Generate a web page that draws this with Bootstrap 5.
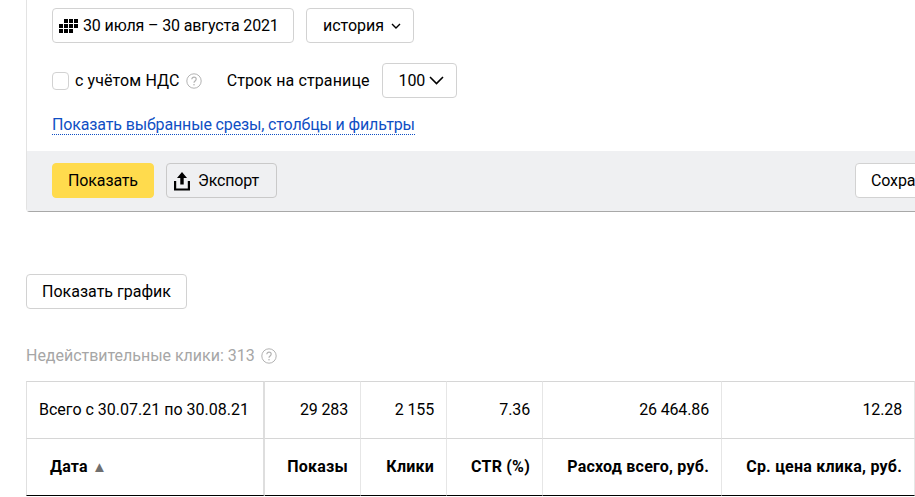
<!DOCTYPE html>
<html lang="ru">
<head>
<meta charset="utf-8">
<title>Статистика</title>
<link href="https://cdn.jsdelivr.net/npm/bootstrap@5.3.0/dist/css/bootstrap.min.css" rel="stylesheet">
<style>
html,body{height:497px;overflow:hidden;background:#fff}
body{font-family:Roboto,"Liberation Sans",sans-serif;font-size:16px;letter-spacing:-.14px;color:#000;line-height:20px}
.pg{width:1200px;padding-left:26px}
.panel{width:1100px;border-left:1px solid #e3e3e3;border-bottom:1px solid #a8a8a8;border-bottom-left-radius:4px;height:212px;display:flex;flex-direction:column}
.body-a{padding:8px 0 0 25px;flex:1}
.ctl{height:35px;border:1px solid #d2d2d2;border-radius:4px;background:#fff;color:#000;font-size:16px;letter-spacing:-.14px;padding:0;display:inline-flex;align-items:center;justify-content:center;line-height:20px}
.c-date{width:242px;justify-content:flex-start;padding-left:6px;gap:5px}
.c-hist{width:108px;margin-left:12px;gap:7px;letter-spacing:0;justify-content:flex-start;padding-left:16px}
.line2{margin-top:20px;height:35px;letter-spacing:.12px}
.chk{width:17px;height:18px;border:1px solid #d2d2d2;border-radius:4px;background:#fff;display:block}
.q{color:#b3b3b3;display:block}
.gap6{margin-left:6px}
.gap25{margin-left:25px}
.c-100{width:75px;gap:4px;margin-left:12px;justify-content:flex-start;padding-left:16px}
.lnk{display:inline-block;margin-top:17px;color:#0f4fc4;text-decoration:none;line-height:19px;border-bottom:1px dotted #0f4fc4}
.foot{background:#eff0f2;height:60px;padding:12px 0 0 25px;position:relative}
.c-show{width:102px;background:#ffdb4d;border-color:#ffdb4d}
.c-exp{width:111px;margin-left:12px;background:#eff0f2;border-color:#c9c9c9;gap:8px;justify-content:flex-start;padding-left:7px}
.c-save{position:absolute;left:828px;top:12px;width:180px;justify-content:flex-start;padding-left:15px}
.c-graph{width:161px;margin-top:62px;letter-spacing:0}
.inv{margin-top:37px;color:#a6a6a6;height:20px;gap:6px;letter-spacing:-.02px}
.tb{margin-top:15px;border-collapse:separate;border-spacing:0;table-layout:fixed;width:889px}
.tb td,.tb th{padding:0 12px 0 0;text-align:right;border-right:1px solid #e6e6e6;vertical-align:middle;white-space:nowrap}
.tb td{height:58px;border-top:1px solid #d6d6d6;border-bottom:1px solid #d6d6d6}
.tb th{border-bottom:1px solid #000;font-weight:700;height:57px;letter-spacing:.22px}
.tb .f{text-align:left;border-left:1px solid #e0e0e0;border-right:2px solid #dedede;padding-left:12px;letter-spacing:0}
.tb th.f{padding-left:23px;letter-spacing:.22px}
.tri{color:#6f6f6f;font-size:15px;font-weight:400}
</style>
</head>
<body>
<div class="pg">
  <div class="panel">
    <div class="body-a">
      <div class="d-flex">
        <button type="button" class="ctl c-date">
          <svg width="19" height="14" viewBox="0 0 19 14" fill="#000"><path d="M5 0h4v4H5zM10 0h4v4h-4zM15 0h4v4h-4zM0 5h4v4H0zM5 5h4v4H5zM10 5h4v4h-4zM15 5h4v4h-4zM0 10h4v4H0zM5 10h4v4H5zM10 10h4v4h-4z"/></svg>
          <span>30 июля – 30 августа 2021</span>
        </button>
        <button type="button" class="ctl c-hist">
          <span>история</span>
          <svg width="10" height="6" viewBox="0 0 10 6" fill="none" stroke="#000" stroke-width="1.4"><path d="M1 1l4 4 4-4"/></svg>
        </button>
      </div>
      <div class="line2 d-flex align-items-center">
        <span class="chk"></span>
        <span class="gap6">с учётом НДС</span>
        <svg class="q gap6" width="16" height="16" viewBox="0 0 16 16" fill="none" stroke="currentColor"><circle cx="8" cy="8" r="7.2"/><path d="M5.8 6.2c0-1.3 1-2.1 2.2-2.1s2.2.8 2.2 2c0 1.900-2.200 1.800-2.200 3.700" stroke-width="1.200"/><circle cx="8" cy="11.800" r=".8" fill="currentColor" stroke="none"/></svg>
        <span class="gap25">Строк на странице</span>
        <button type="button" class="ctl c-100">
          <span>100</span>
          <svg width="15" height="9" viewBox="0 0 15 9" fill="none" stroke="#000" stroke-width="1.600"><path d="M1 1l6.500 6.500L14 1"/></svg>
        </button>
      </div>
      <a href="#" class="lnk">Показать выбранные срезы, столбцы и фильтры</a>
    </div>
    <div class="foot">
      <div class="d-flex">
        <button type="button" class="ctl c-show">Показать</button>
        <button type="button" class="ctl c-exp">
          <svg width="16" height="20" viewBox="0 0 16 20" fill="#000"><path d="M8 1l5 6H9.700v6.500H6.300V7H3z"/><path d="M0 10h2.200v7.500h11.600V10H16v9.500H0z"/></svg>
          <span>Экспорт</span>
        </button>
      </div>
      <button type="button" class="ctl c-save">Сохранить</button>
    </div>
  </div>
  <button type="button" class="ctl c-graph">Показать график</button>
  <div class="inv d-flex align-items-center">
    <span>Недействительные клики: 313</span>
    <svg class="q" width="16" height="16" viewBox="0 0 16 16" fill="none" stroke="currentColor"><circle cx="8" cy="8" r="7.2"/><path d="M5.8 6.2c0-1.300 1-2.100 2.200-2.100s2.200.8 2.200 2c0 1.900-2.200 1.800-2.200 3.700" stroke-width="1.200"/><circle cx="8" cy="11.800" r=".8" fill="currentColor" stroke="none"/></svg>
  </div>
  <table class="tb">
    <colgroup><col style="width:239px"><col style="width:96px"><col style="width:86px"><col style="width:96px"><col style="width:179px"><col style="width:193px"></colgroup>
    <tbody>
      <tr><td class="f">Всего с 30.07.21 по 30.08.21</td><td>29 283</td><td>2 155</td><td>7.36</td><td>26 464.86</td><td>12.28</td></tr>
      <tr><th class="f">Дата <span class="tri">▲</span></th><th>Показы</th><th>Клики</th><th>CTR (%)</th><th>Расход всего, руб.</th><th>Ср. цена клика, руб.</th></tr>
    </tbody>
  </table>
</div>
</body>
</html>
